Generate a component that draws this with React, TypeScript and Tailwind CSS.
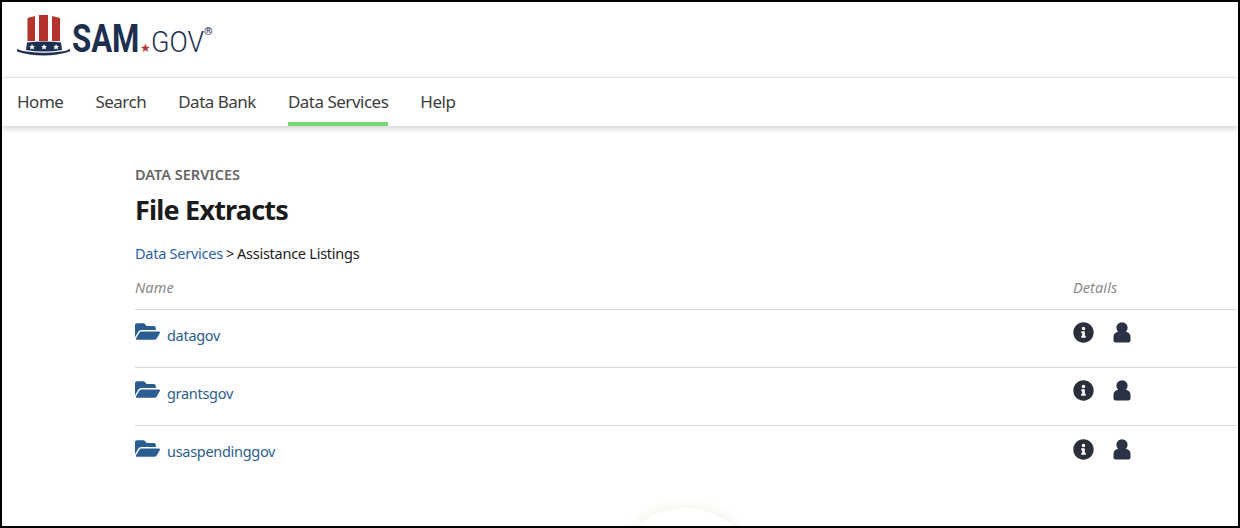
import React from "react";
import { FaFolderOpen, FaInfoCircle } from "react-icons/fa";

function Hat() {
  return (
    <svg width="54" height="41" viewBox="0 0 54 41" className="shrink-0">
      <path d="M10.5 3 L18 1 L18 26 L10.5 26 Z" fill="#b5332a" />
      <path d="M22 0 L31 0 L31 26 L22 26 Z" fill="#b5332a" />
      <path d="M35 1 L43 3 L43 26 L35 26 Z" fill="#b5332a" />
      <path d="M10 27.5 Q27 25.5 44 27.5 L45 35 Q27 38 9 35 Z" fill="#1d2f50" />
      <path d="M0 34 Q6 36.5 10 36.5 Q27 39 44 36.5 Q48 36.5 53 34 L53 36.5 Q40 40.5 27 40.5 Q12 40.5 0 36.5 Z" fill="#1d2f50" />
      <path d="M15 29 l1 2 2 0 -1.5 1.4 .6 2 -2 -1 -2 1 .6 -2 -1.5 -1.4 2 0 Z" fill="#fff" />
      <path d="M27 29 l1 2 2 0 -1.5 1.4 .6 2 -2 -1 -2 1 .6 -2 -1.5 -1.4 2 0 Z" fill="#fff" />
      <path d="M39 29 l1 2 2 0 -1.5 1.4 .6 2 -2 -1 -2 1 .6 -2 -1.5 -1.4 2 0 Z" fill="#fff" />
    </svg>
  );
}

function UserIcon() {
  return (
    <svg width="18" height="21" viewBox="0 0 18 21" className="text-[#2b3245]">
      <circle cx="9" cy="5.8" r="5.6" fill="currentColor" />
      <path
        d="M2.5 20.5 Q0.5 20.5 0.5 18.5 V15 C0.5 11.8 2.8 10 5.5 10 H12.5 C15.2 10 17.5 11.8 17.5 15 V18.5 Q17.5 20.5 15.5 20.5 Z"
        fill="currentColor"
      />
    </svg>
  );
}

const nav = ["Home", "Search", "Data Bank", "Data Services", "Help"];
const rows = ["datagov", "grantsgov", "usaspendinggov"];

export default function App() {
  return (
    <div className="relative h-[528px] overflow-hidden border-2 border-black bg-white font-['Noto_Sans',sans-serif]">
      {/* Logo */}
      <div className="flex h-[76px] items-start border-b border-[#f0f0f0] pl-[15px] pt-[13px]">
        <Hat />
        <div className="ml-[1px] mt-[8px] flex items-baseline font-['Roboto',sans-serif] text-[#1d2f50]">
          <span className="w-[68px] origin-left scale-x-[0.82] text-[38px] font-bold leading-[32px]">SAM</span>
          <span className="text-[12px] leading-none text-[#b5332a]">★</span>
          <span className="w-[53px] origin-left scale-x-[0.93] text-[29px] font-light leading-none">GOV</span>
          <span className="mt-[3px] self-start text-[11px] font-medium leading-none">®</span>
        </div>
      </div>

      {/* Nav */}
      <nav className="relative z-10 flex h-[48px] items-stretch gap-[32px] pl-[15px] shadow-[0_2px_6px_rgba(0,0,0,0.2)]">
        {nav.map((item) => (
          <a
            key={item}
            className={
              "flex items-center text-[17px] tracking-[-0.5px] text-[#3d3d3d] " +
              (item === "Data Services" ? "border-b-[4px] border-[#79d873] pt-[4px]" : "")
            }
          >
            {item}
          </a>
        ))}
      </nav>

      {/* Main */}
      <main className="pl-[133px] pr-[1px] pt-[39px]">
        <p className="text-[14.5px] font-semibold leading-[18px] text-[#666]">DATA SERVICES</p>
        <h1 className="mt-[9px] text-[27px] font-bold leading-[36px] tracking-[-0.8px] text-[#1b1b1b]">File Extracts</h1>
        <div className="mt-[15px] flex items-center text-[14.5px] leading-[20px] tracking-[-0.25px] text-[#1b1b1b]">
          <a className="text-[#2a5fb0]">Data Services</a>
          <span className="mx-[3px]">&gt;</span>
          <span>Assistance Listings</span>
        </div>

        <div className="mt-[14px] flex h-[33px] items-start border-b border-[#d8d8d8] pt-[1px] text-[14.5px] italic leading-[18px] tracking-[0.1px] text-[#8a8a8a]">
          <span className="w-[938px]">Name</span>
          <span>Details</span>
        </div>

        {rows.map((row) => (
          <div key={row} className="flex h-[58px] items-center border-b border-[#d8d8d8] pb-[6px] last:border-b-0">
            <div className="flex w-[938px] items-center">
              <FaFolderOpen className="-mt-[8px] h-[23px] w-[25px] text-[#2a5d92]" />
              <a className="ml-[7px] text-[14.5px] tracking-[-0.3px] text-[#2a5d92]">{row}</a>
            </div>
            <div className="-mt-[6px] flex items-center gap-[19px]">
              <FaInfoCircle className="h-[21px] w-[21px] text-[#2b2f3a]" />
              <UserIcon />
            </div>
          </div>
        ))}
      </main>

      {/* Loading ring peeking from the bottom */}
      <div className="absolute left-[610px] top-[506px] h-[146px] w-[146px] rounded-full shadow-[0_0_10px_4px_#f6f6f0]" />
    </div>
  );
}
